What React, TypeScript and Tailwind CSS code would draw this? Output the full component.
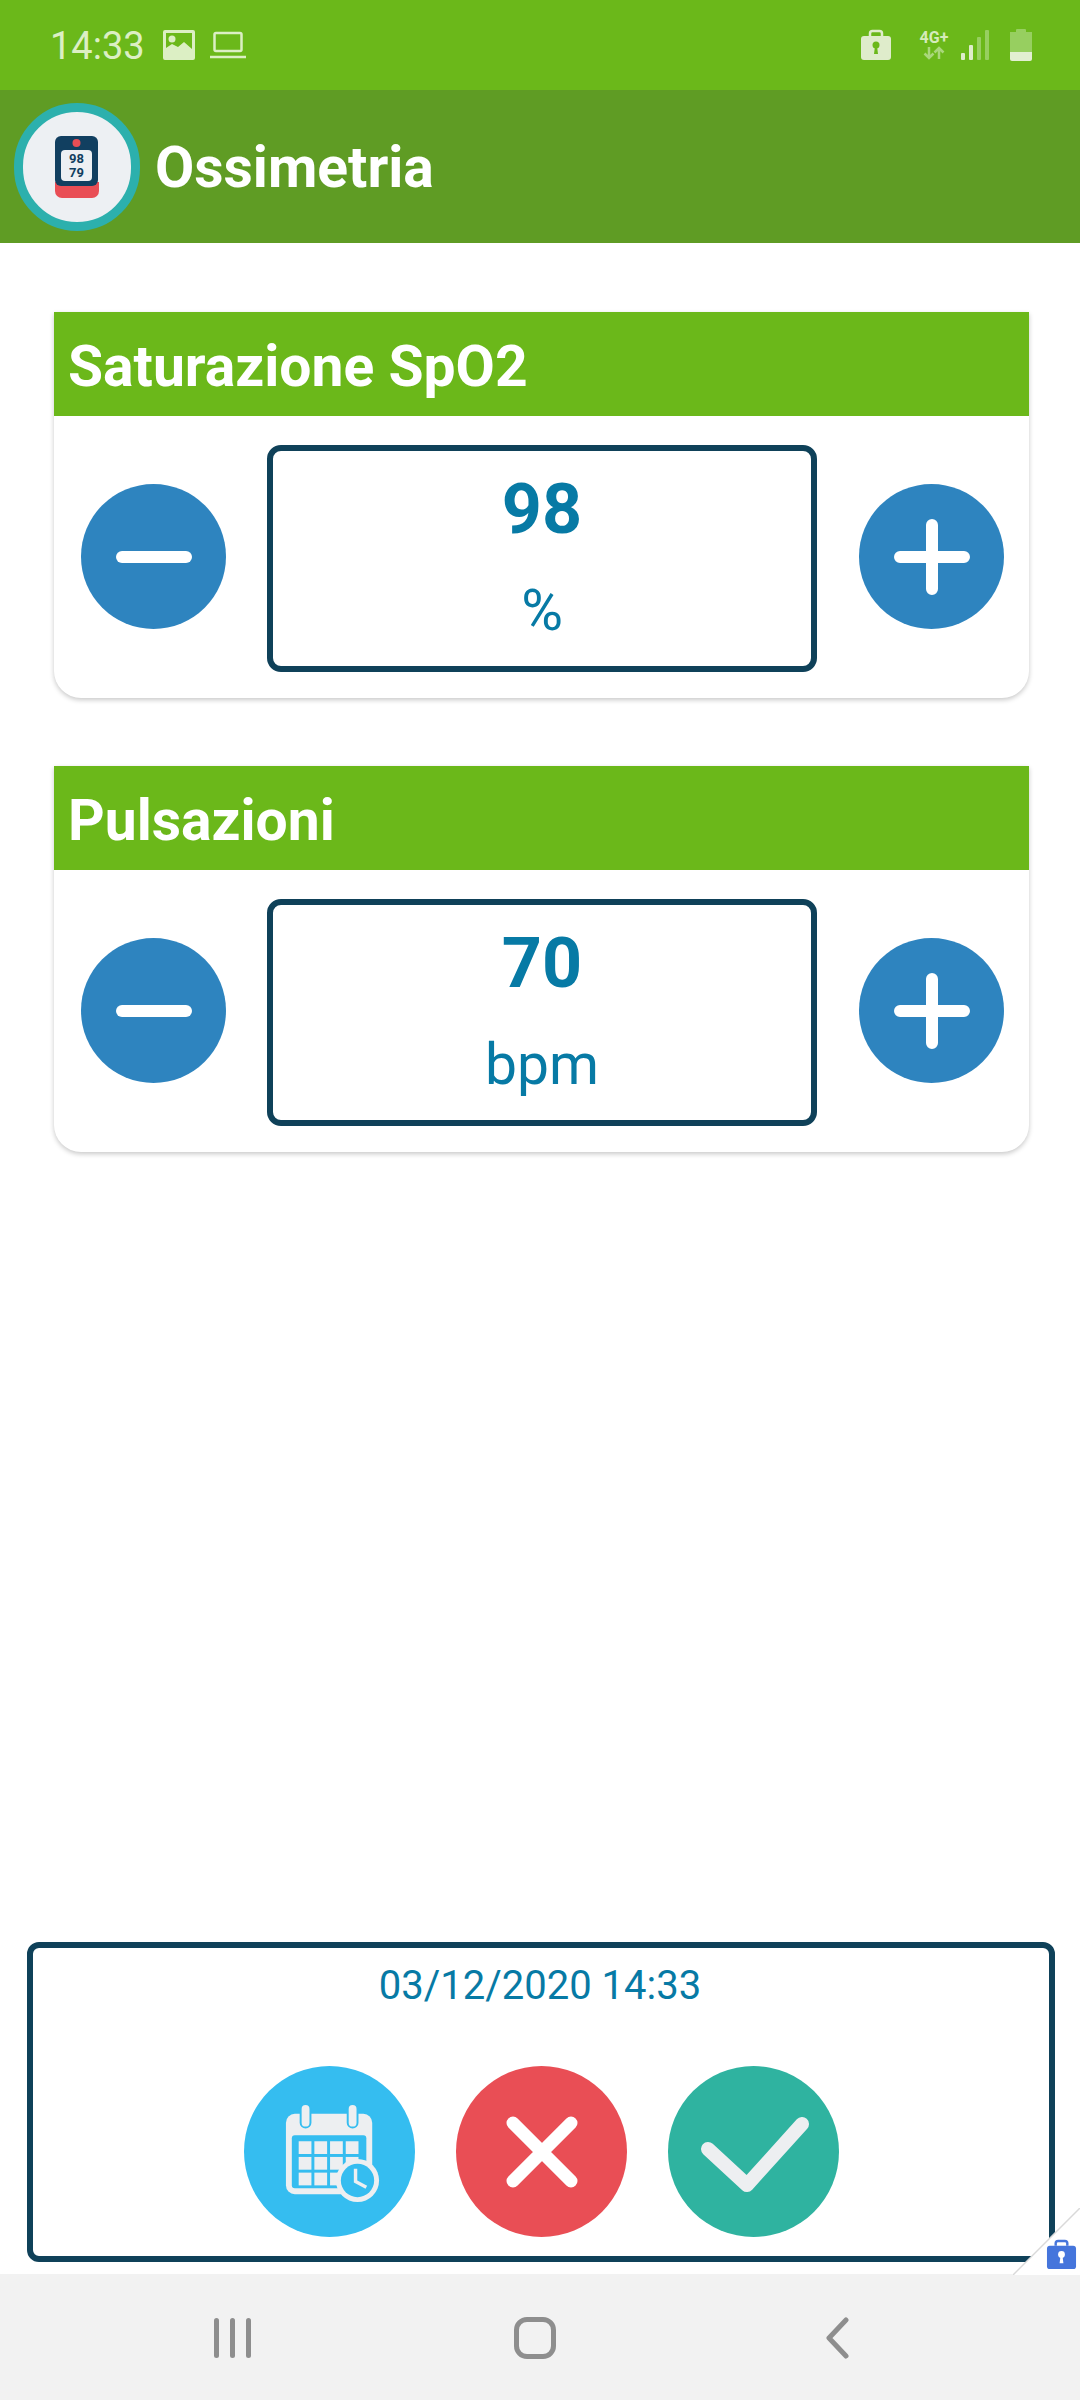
import React from "react";

function Stepper({ title, value, unit }: { title: string; value: string; unit: string }) {
  return (
    <section className="w-[975px] h-[386px] rounded-b-[27px] bg-white shadow-[0_2px_5px_rgba(0,0,0,0.22)] flex flex-col">
      <h2 className="h-[104px] bg-[#6bb81a] text-white font-bold text-[57px] leading-[110px] pl-[14px]">{title}</h2>
      <div className="flex items-start pl-[27px] pt-[29px]">
        <button className="mt-[39px] w-[145px] h-[145px] rounded-full bg-[#2e84bf] flex items-center justify-center shrink-0">
          <svg width="76" height="12" viewBox="0 0 76 12"><rect width="76" height="12" rx="6" fill="#fff" /></svg>
        </button>
        <div className="ml-[41px] w-[550px] h-[227px] shrink-0 rounded-[14px] border-[6px] border-[#0f4159] flex flex-col items-center text-[#077aa5]">
          <div className="font-bold text-[70px] leading-[84px] mt-[16px]">{value}</div>
          <div className="text-[57px] leading-[64px] mt-[28px]">{unit}</div>
        </div>
        <button className="ml-[42px] w-[145px] h-[145px] mt-[39px] rounded-full bg-[#2e84bf] flex items-center justify-center shrink-0">
          <svg width="76" height="76" viewBox="0 0 76 76" fill="none" stroke="#fff" strokeWidth="12" strokeLinecap="round"><path d="M6 38H70M38 6V70" /></svg>
        </button>
      </div>
    </section>
  );
}

function Lock({ color, hole, size }: { color: string; hole: string; size: number }) {
  return (
    <svg width={size} height={size} viewBox="0 0 32 32">
      <path d="M10 7V4.500C10 3 11 2 12.500 2h7C21 2 22 3 22 4.500V7" fill="none" stroke={color} strokeWidth="2.500" />
      <rect x="1" y="7" width="30" height="24" rx="3" fill={color} />
      <circle cx="16" cy="16" r="3.500" fill={hole} />
      <path d="M15 17h2l1 8h-4z" fill={hole} />
    </svg>
  );
}

export default function App() {
  return (
    <div className="relative w-[1080px] h-[2400px] bg-white flex flex-col overflow-hidden font-['Roboto',sans-serif]">
      <header className="h-[90px] bg-[#6bb81a] flex items-center shrink-0 pl-[50px] pr-[48px] text-[#dcefc4]">
        <span className="text-[38px] leading-[90px] mt-[2px]">14:33</span>
        <svg className="ml-[18px]" width="32" height="30" viewBox="0 0 32 30">
          <path fillRule="evenodd" fill="#dcefc4" d="M2 0h28a2 2 0 0 1 2 2v26a2 2 0 0 1-2 2H2a2 2 0 0 1-2-2V2a2 2 0 0 1 2-2zM3 3v15l6-4 6 3 6-5 8 7V3z" />
          <circle cx="9" cy="9" r="3.500" fill="#dcefc4" />
        </svg>
        <svg className="ml-[15px]" width="36" height="28" viewBox="0 0 36 28" fill="none" stroke="#dcefc4" strokeWidth="2.500">
          <rect x="4.500" y="2" width="27" height="18" rx="1.500" />
          <path d="M0 26H36" />
        </svg>
        <div className="ml-auto flex items-center">
          <Lock color="#dfeccb" hole="#6bb81a" size={32} />
          <div className="ml-[26px] flex flex-col items-center w-[32px] text-[#d6ebba]">
            <span className="text-[16px] leading-[16px] font-bold">4G+</span>
            <svg width="22" height="14" viewBox="0 0 22 14" fill="none" stroke="#a9d77b" strokeWidth="2.500"><path d="M6 1v11M1.500 7.500 6 12l4.500-4.500M16 13V2M11.500 6.500 16 2l4.500 4.500" /></svg>
          </div>
          <svg className="ml-[11px]" width="28" height="32" viewBox="0 0 28 32">
            <rect x="0" y="24" width="4" height="7" rx="1" fill="#dfeccb" />
            <rect x="8" y="16" width="4" height="15" rx="1" fill="#dfeccb" />
            <rect x="16" y="8" width="4" height="23" rx="1" fill="#97cf60" />
            <rect x="24" y="1" width="4" height="30" rx="1" fill="#97cf60" />
          </svg>
          <svg className="ml-[21px]" width="22" height="32" viewBox="0 0 22 32">
            <rect x="6" y="0" width="10" height="4" rx="1" fill="#97cf60" />
            <rect x="0" y="3" width="22" height="20" fill="#97cf60" />
            <path d="M0 23h22v7a2 2 0 0 1-2 2H2a2 2 0 0 1-2-2z" fill="#e2efd2" />
          </svg>
        </div>
      </header>

      <div className="h-[153px] bg-[#5f9c24] flex items-center shrink-0 pl-[14px]">
        <div className="w-[126px] h-[128px] mt-[1px] rounded-full border-[9px] border-[#2cb0ad] bg-[#edf0f3] flex items-center justify-center">
          <svg width="44" height="62" viewBox="0 0 44 62">
            <path d="M0 46h44v9a7 7 0 0 1-7 7H7a7 7 0 0 1-7-7z" fill="#e94e55" />
            <rect x="0" y="0" width="43" height="50" rx="6" fill="#113f60" />
            <rect x="6" y="14" width="31" height="31" rx="4" fill="#edf0f3" />
            <circle cx="21.500" cy="7" r="4" fill="#e94e55" />
            <text x="21.500" y="27" textAnchor="middle" fontSize="13" fontWeight="700" fill="#113f60" fontFamily="Roboto, sans-serif">98</text>
            <text x="21.500" y="41" textAnchor="middle" fontSize="13" fontWeight="700" fill="#113f60" fontFamily="Roboto, sans-serif">79</text>
          </svg>
        </div>
        <h1 className="ml-[15px] text-white font-bold text-[57px] leading-[60px] mt-[2px]">Ossimetria</h1>
      </div>

      <main className="flex-1 pt-[69px] pl-[54px] flex flex-col gap-[68px]">
        <Stepper title="Saturazione SpO2" value="98" unit="%" />
        <Stepper title="Pulsazioni" value="70" unit="bpm" />
      </main>

      <section className="ml-[27px] w-[1028px] h-[320px] rounded-[12px] border-[6px] border-[#0f4159] flex flex-col items-center shrink-0">
        <div className="text-[40px] leading-[46px] text-[#077aa5] mt-[15px] ml-[-2px]">03/12/2020 14:33</div>
        <div className="flex gap-[41px] mt-[57px] ml-[1px]">
          <button className="w-[171px] h-[171px] rounded-full bg-[#35bdf0] flex items-center justify-center">
            <svg width="96" height="100" viewBox="0 0 96 102" className="ml-[6px] mt-[4px]">
              <rect x="0" y="10" width="88" height="82" rx="9" fill="#edeff1" />
              <rect x="6" y="32" width="76" height="54" rx="3" fill="#35bdf0" />
              <rect x="15" y="0" width="10" height="24" rx="5" fill="#edeff1" stroke="#35bdf0" strokeWidth="2" />
              <rect x="63" y="0" width="10" height="24" rx="5" fill="#edeff1" stroke="#35bdf0" strokeWidth="2" />
              <g fill="#edeff1">
                {[38, 54, 70].map((y) => [13, 29, 45, 61].map((x) => <rect key={x + "-" + y} x={x} y={y} width="13" height="13" />))}
              </g>
              <circle cx="73" cy="78" r="22" fill="#edeff1" />
              <circle cx="73" cy="78" r="17" fill="#35bdf0" />
              <path d="M71 66v13l11 6" fill="none" stroke="#edeff1" strokeWidth="3.500" />
            </svg>
          </button>
          <button className="w-[171px] h-[171px] rounded-full bg-[#e94e55] flex items-center justify-center">
            <svg width="72" height="72" viewBox="0 0 72 72" fill="none" stroke="#fff" strokeWidth="13" strokeLinecap="round"><path d="M7 7 65 65M65 7 7 65" /></svg>
          </button>
          <button className="w-[171px] h-[171px] rounded-full bg-[#2fb3a0] flex items-center justify-center">
            <svg width="108" height="76" viewBox="0 0 108 76" fill="none" stroke="#edeff1" strokeWidth="14" strokeLinecap="round" strokeLinejoin="round" className="mt-[6px] ml-[2px]"><path d="M7 32 46 68 101 7" /></svg>
          </button>
        </div>
      </section>

      <nav className="mt-[12px] h-[126px] bg-[#f2f2f2] shrink-0 flex items-center relative">
        <svg className="ml-[214px] mt-[1px]" width="38" height="40" viewBox="0 0 38 40" fill="#8e8e8e">
          <rect x="0" y="0" width="5" height="40" rx="2.500" />
          <rect x="16" y="0" width="5" height="40" rx="2.500" />
          <rect x="32" y="0" width="5" height="40" rx="2.500" />
        </svg>
        <div className="ml-[262px] mt-[1px] w-[42px] h-[42px] rounded-[13px] border-[5px] border-[#8e8e8e]" />
        <svg className="ml-[270px] mt-[1px]" width="23" height="42" viewBox="0 0 23 42" fill="none" stroke="#8e8e8e" strokeWidth="5" strokeLinecap="round" strokeLinejoin="round"><path d="M20 3 3 21 20 39" /></svg>
      </nav>

      <div className="absolute right-0 top-[2208px] w-[67px] h-[67px]">
        <svg width="67" height="67" viewBox="0 0 67 67" className="absolute inset-0">
          <path d="M67 0V67H0z" fill="#fff" />
          <path d="M67 0 0 67" stroke="#d9d9d9" strokeWidth="1.500" />
        </svg>
        <div className="absolute left-[33px] top-[31px]">
          <Lock color="#4575dc" hole="#fff" size={31} />
        </div>
      </div>
    </div>
  );
}
